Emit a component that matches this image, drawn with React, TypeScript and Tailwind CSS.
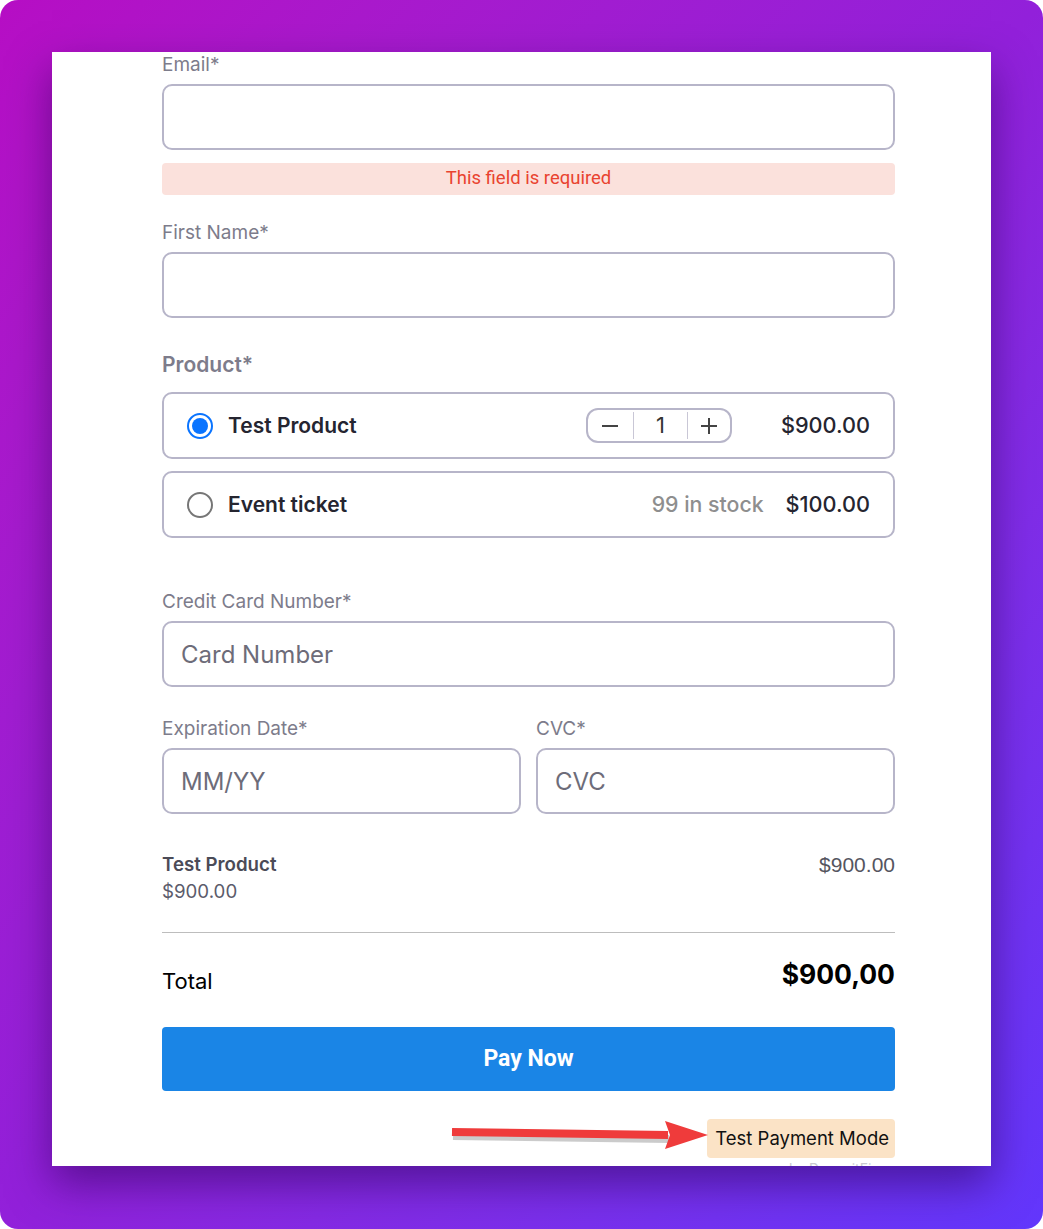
import { useState } from "react";

const inter = "font-['Inter','Noto_Sans',sans-serif]";
const roboto = "font-['Roboto','Liberation_Sans',sans-serif]";

function FieldLabel({ text, className = "" }: { text: string; className?: string }) {
  return (
    <label className={`block text-[19px] leading-[24px] text-[#7d7c8b] ${className}`}>
      {text}
    </label>
  );
}

function TextInput({ placeholder = "", className = "" }: { placeholder?: string; className?: string }) {
  return (
    <input
      placeholder={placeholder}
      className={`h-[66px] w-full rounded-[10px] border-2 border-[#b7b5c9] bg-white px-[17px] text-[24px] text-[#333] outline-none placeholder:text-[#6d6c79] ${className}`}
    />
  );
}

function Radio({ checked }: { checked: boolean }) {
  return (
    <span
      className={`flex h-[26px] w-[26px] shrink-0 items-center justify-center rounded-full border-2 ${
        checked ? "border-[#0a74ff]" : "border-[#767676]"
      }`}
    >
      {checked && <span className="h-[16px] w-[16px] rounded-full bg-[#0a74ff]" />}
    </span>
  );
}

function Stepper({ value, onChange }: { value: number; onChange: (v: number) => void }) {
  return (
    <div className="flex h-[35px] w-[146px] items-stretch rounded-[12px] border-2 border-[#b7b5c9] text-[#333]">
      <button
        className="flex w-[45px] items-center justify-center"
        onClick={() => onChange(Math.max(1, value - 1))}
      >
        <svg width="18" height="18" viewBox="0 0 18 18">
          <path d="M1 9h16" stroke="#444" strokeWidth="2" />
        </svg>
      </button>
      <div className="my-[2px] w-px bg-[#c9c7d6]" />
      <div className="flex w-[53px] items-center justify-center text-[22px]">{value}</div>
      <div className="my-[2px] w-px bg-[#c9c7d6]" />
      <button className="flex flex-1 items-center justify-center" onClick={() => onChange(value + 1)}>
        <svg width="18" height="18" viewBox="0 0 18 18">
          <path d="M1 9h16M9 1v16" stroke="#444" strokeWidth="2" />
        </svg>
      </button>
    </div>
  );
}

export default function App() {
  const [selected, setSelected] = useState(0);
  const [qty, setQty] = useState(1);

  return (
    <div className={`h-[1229px] w-[1043px] overflow-hidden rounded-[18px] bg-linear-to-br from-[#b60dc4] via-[#9220da] to-[#6236fc] pt-[52px] pl-[52px] ${inter}`}>
      <div className="relative h-[1114px] w-[939px] overflow-hidden bg-white shadow-[0_18px_40px_rgba(45,0,90,0.55)]">
        <div className="ml-[110px] flex w-[733px] flex-col pt-px">
          {/* Email */}
          <FieldLabel text="Email*" />
          <TextInput className="mt-[7px]" />
          <div className={`mt-[13px] flex h-[32px] items-center justify-center rounded-[4px] bg-[#fbe1dc] text-[18.5px] text-[#e9432f] ${roboto}`}>
            This field is required
          </div>

          {/* First name */}
          <FieldLabel text="First Name*" className="mt-[26px]" />
          <TextInput className="mt-[7px]" />

          {/* Products */}
          <div className="mt-[34px] text-[21px] leading-[26px] font-semibold text-[#7d7c8b]">Product*</div>
          <div
            className="mt-[14px] flex h-[67px] cursor-pointer items-center rounded-[10px] border-2 border-[#b7b5c9] pr-[23px] pl-[23px]"
            onClick={() => setSelected(0)}
          >
            <Radio checked={selected === 0} />
            <span className="ml-[15px] text-[21px] font-semibold text-[#252530]">Test Product</span>
            <div className="ml-auto">
              <Stepper value={qty} onChange={setQty} />
            </div>
            <span className="ml-[49px] text-[21.7px] font-medium text-[#252530]">$900.00</span>
          </div>
          <div
            className="mt-[12px] flex h-[67px] cursor-pointer items-center rounded-[10px] border-2 border-[#b7b5c9] pr-[23px] pl-[23px]"
            onClick={() => setSelected(1)}
          >
            <Radio checked={selected === 1} />
            <span className="ml-[15px] text-[21px] font-semibold text-[#252530]">Event ticket</span>
            <span className="ml-auto text-[21.3px] font-medium text-[#8e8e8e]">99 in stock</span>
            <span className="ml-[22px] text-[21.7px] font-medium text-[#252530]">$100.00</span>
          </div>

          {/* Card */}
          <FieldLabel text="Credit Card Number*" className="mt-[52px]" />
          <TextInput placeholder="Card Number" className="mt-[7px]" />

          <div className="mt-[30px] grid grid-cols-2 gap-x-[15px]">
            <div>
              <FieldLabel text="Expiration Date*" />
              <TextInput placeholder="MM/YY" className="mt-[7px]" />
            </div>
            <div>
              <FieldLabel text="CVC*" />
              <TextInput placeholder="CVC" className="mt-[7px]" />
            </div>
          </div>

          {/* Summary */}
          <div className="mt-[39px] flex items-start justify-between">
            <div>
              <div className="text-[18.7px] leading-[24px] font-semibold text-[#4b4b57]">Test Product</div>
              <div className="mt-[3px] text-[18.7px] leading-[24px] text-[#5b5b6b]">$900.00</div>
            </div>
            <div className="font-['Liberation_Sans',sans-serif] text-[21px] leading-[24px] text-[#55555f]">$900.00</div>
          </div>
          <div className="mt-[28px] h-px bg-[#bdbdbd]" />

          <div className="mt-[25px] flex items-start justify-between">
            <span className="mt-[9px] text-[22px] leading-[28px] text-black">Total</span>
            <span className="text-[26.5px] leading-[32px] font-bold text-black">$900,00</span>
          </div>

          <button className={`mt-[32px] h-[64px] w-full rounded-[4px] bg-[#1a85e6] text-[23px] font-bold text-white ${roboto}`}>
            Pay Now
          </button>

          <div className="mt-[28px] flex flex-col items-end">
            <span className="flex h-[39px] items-center rounded-[4px] bg-[#fbe3c6] pr-[6px] pl-[8px] text-[18.5px] text-[#111]">
              Test Payment Mode
            </span>
            <span className="mt-[2px] mr-[16px] text-[14px] leading-[18px] text-[#c9c9cf]">by DepositFix</span>
          </div>
        </div>

        {/* Pointer arrow */}
        <svg className="absolute top-[1064px] left-[396px]" width="264" height="40" viewBox="0 0 264 40">
          <path d="M4 18 L220 21" stroke="#6a6a6a" strokeOpacity="0.35" strokeWidth="8" transform="translate(1 2)" />
          <path d="M4 16 L220 19" stroke="#ef3b3b" strokeWidth="8" />
          <polygon points="217,5 260,19 217,33 222,19" fill="#ef3b3b" />
        </svg>
      </div>
    </div>
  );
}
